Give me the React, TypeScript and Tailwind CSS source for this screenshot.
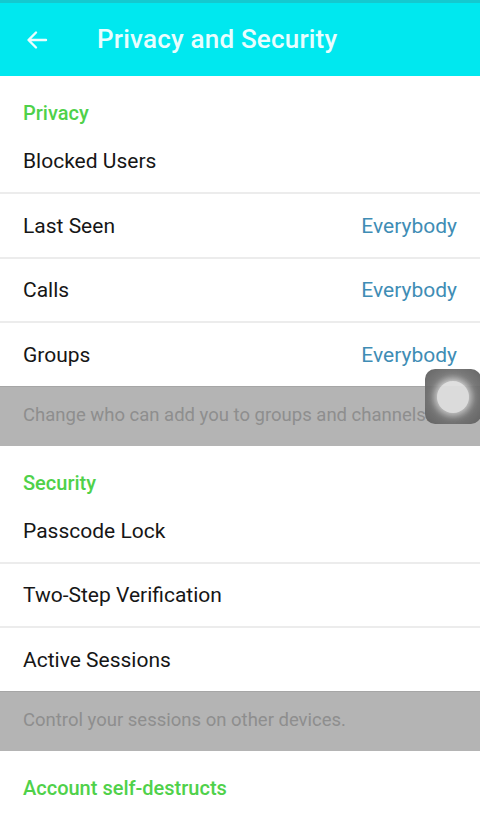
import React from "react";

type Row = { label: string; value?: string };

function Divider() {
  return <div className="h-[2px] bg-[#ececec]" />;
}

function SectionTitle({ text }: { text: string }) {
  return (
    <div className="px-[23px] pt-[24px] h-[50px] text-[20px] leading-[26px] font-medium text-[#4fd14a]">
      {text}
    </div>
  );
}

function SettingRow({ row, first }: { row: Row; first?: boolean }) {
  return (
    <div
      className={`flex items-center justify-between px-[23px] text-[21px] ${
        first ? "h-[66px] pt-[6px]" : "h-[62.5px] pt-[2px]"
      }`}
    >
      <span className="text-[#161616]">{row.label}</span>
      {row.value && <span className="text-[#3f8db5]">{row.value}</span>}
    </div>
  );
}

function Hint({ text }: { text: string }) {
  return (
    <div className="h-[60px] flex items-center px-[23px] bg-[#b4b4b4] border-t border-[#a6a6a6] text-[18.5px] text-[#8e8e8e] whitespace-nowrap">
      {text}
    </div>
  );
}

export default function App() {
  const privacy: Row[] = [
    { label: "Blocked Users" },
    { label: "Last Seen", value: "Everybody" },
    { label: "Calls", value: "Everybody" },
    { label: "Groups", value: "Everybody" },
  ];
  const security: Row[] = [
    { label: "Passcode Lock" },
    { label: "Two-Step Verification" },
    { label: "Active Sessions" },
  ];

  return (
    <div
      className="relative w-[480px] h-[824px] overflow-hidden bg-white"
      style={{ fontFamily: "Roboto, 'Noto Sans', sans-serif" }}
    >
      <header className="h-[76px] bg-[#00e8ef] border-t-[3px] border-[#14c9cf] flex items-center">
        <div className="w-[97px] flex items-center pl-[25px]">
          <svg width="24" height="24" viewBox="0 0 24 24" fill="none">
            <path
              d="M21 12H4M11 4.5L3.5 12L11 19.5"
              stroke="#e9fdfe"
              strokeWidth="2.4"
              strokeLinecap="round"
              strokeLinejoin="round"
            />
          </svg>
        </div>
        <h1 className="text-[26px] font-medium text-[#e9fdfe] tracking-[0.2px]">
          Privacy and Security
        </h1>
      </header>

      <SectionTitle text="Privacy" />
      {privacy.map((row, i) => (
        <React.Fragment key={row.label}>
          {i > 0 && <Divider />}
          <SettingRow row={row} first={i === 0} />
        </React.Fragment>
      ))}
      <Hint text="Change who can add you to groups and channels." />

      <SectionTitle text="Security" />
      {security.map((row, i) => (
        <React.Fragment key={row.label}>
          {i > 0 && <Divider />}
          <SettingRow row={row} first={i === 0} />
        </React.Fragment>
      ))}
      <Hint text="Control your sessions on other devices." />

      <SectionTitle text="Account self-destructs" />

      {/* floating assistive touch button */}
      <div className="absolute left-[425px] top-[369px] w-[56px] h-[55px] rounded-[10px] bg-[radial-gradient(circle,#b8b8b8_0%,#7a7a7a_45%,#5e5e5e_100%)] opacity-95 flex items-center justify-center">
        <div className="w-[32px] h-[32px] rounded-full bg-[#dedede] shadow-[0_0_6px_3px_rgba(255,255,255,0.55)]" />
      </div>
    </div>
  );
}
